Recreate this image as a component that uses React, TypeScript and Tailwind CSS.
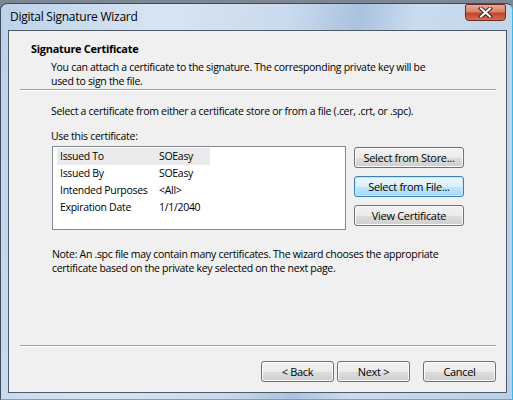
import React from 'react';

const Btn = ({ label, focused, className = '' }: any) => (
  <button
    className={`h-[21px] rounded-[3px] border text-[11px] tracking-[-0.3px] text-black leading-none flex items-center justify-center ${
      focused
        ? 'border-[#3c7fb1] bg-[linear-gradient(180deg,#eaf6fd_0%,#d9f0fc_50%,#bee6fd_51%,#a7d9f5_100%)] shadow-[inset_0_0_0_1px_#c4e9fc]'
        : 'border-[#707070] bg-[linear-gradient(180deg,#f2f2f2_0%,#ebebeb_50%,#dddddd_51%,#cfcfcf_100%)] shadow-[inset_0_0_0_1px_#fcfcfc]'
    } ${className}`}
  >
    {label}
  </button>
);

const rows = [
  ['Issued To', 'SOEasy'],
  ['Issued By', 'SOEasy'],
  ['Intended Purposes', '<All>'],
  ['Expiration Date', '1/1/2040'],
];

const Separator = () => (
  <div className="ml-[11px] mr-[10px] h-[2px] border-t border-[#a0a0a0] border-b-white border-b" />
);

export default function App() {
  return (
    <div className="w-[513px] h-[400px] bg-[#7d8793] pt-[3px] overflow-hidden font-['Open_Sans',sans-serif] text-black">
      <div className="relative h-[397px] rounded-t-[7px] border border-[#3f4b58] border-r-[#3fb8e8] border-b-[#3fb8e8] bg-[linear-gradient(100deg,#bcd1ea_0%,#d7e5f3_28%,#c9daed_50%,#aac2de_62%,#cadcef_72%,#b9cfe8_100%)] flex flex-col pl-[7px] pr-[5px] pb-[6px]">
        <div className="h-[26px] flex items-center pl-[2px] text-[12px] tracking-[-0.25px]">Digital Signature Wizard</div>
        <div className="absolute top-0 right-[6px] w-[41px] h-[17px] rounded-b-[4px] rounded-t-[2px] border border-[#6b2b22] bg-[linear-gradient(180deg,#e9a999_0%,#d8806a_45%,#c4452b_55%,#d66a4e_100%)] flex items-center justify-center">
          <svg width="15" height="11" viewBox="0 0 15 11">
            <path d="M3 1.5 L12 9.5 M12 1.5 L3 9.5" stroke="#3a2a28" strokeWidth="4" strokeLinecap="square" />
            <path d="M3 1.5 L12 9.5 M12 1.5 L3 9.5" stroke="#ffffff" strokeWidth="2" strokeLinecap="square" />
          </svg>
        </div>

        <div className="flex-1 border border-[#4f5a66] bg-[#f0f0f0] flex flex-col text-[10.5px] tracking-[-0.3px]">
          <div className="pt-[10px] pl-[22px] font-bold leading-[15px] text-[11px]">Signature Certificate</div>
          <div className="mt-[4px] pl-[42px] leading-[14px] whitespace-nowrap">
            You can attach a certificate to the signature. The corresponding private key will be
            <br />
            used to sign the file.
          </div>
          <div className="mt-[1px]">
            <Separator />
          </div>

          <div className="mt-[13px] pl-[42px] leading-[15px] whitespace-nowrap">
            Select a certificate from either a certificate store or from a file (.cer, .crt, or .spc).
          </div>
          <div className="mt-[10px] pl-[42px] leading-[15px]">Use this certificate:</div>

          <div className="mt-[2px] pl-[43px] flex gap-[8px]">
            <div className="w-[294px] h-[84px] bg-white border border-[#828790] pt-[1px] pl-[4px]">
              {rows.map(([k, v], i) => (
                <div
                  key={k}
                  className={`w-[153px] h-[17px] flex items-center pl-[3px] whitespace-nowrap ${i === 0 ? 'bg-[#ebebeb]' : ''}`}
                >
                  <span className="w-[99px]">{k}</span>
                  <span>{v}</span>
                </div>
              ))}
            </div>
            <div className="flex flex-col gap-[8px] pt-[1px]">
              <Btn label="Select from Store..." className="w-[110px]" />
              <Btn label="Select from File..." focused className="w-[110px]" />
              <Btn label="View Certificate" className="w-[110px]" />
            </div>
          </div>

          <div className="mt-[17px] pl-[43px] leading-[14px] whitespace-nowrap">
            Note: An .spc file may contain many certificates. The wizard chooses the appropriate
            <br />
            certificate based on the private key selected on the next page.
          </div>

          <div className="flex-1" />
          <Separator />
          <div className="mt-[14px] mb-[10px] mr-[10px] flex justify-end">
            <Btn label="< Back" className="w-[73px]" />
            <Btn label="Next >" className="w-[73px] ml-[3px]" />
            <Btn label="Cancel" className="w-[73px] ml-[13px]" />
          </div>
        </div>
      </div>
    </div>
  );
}
